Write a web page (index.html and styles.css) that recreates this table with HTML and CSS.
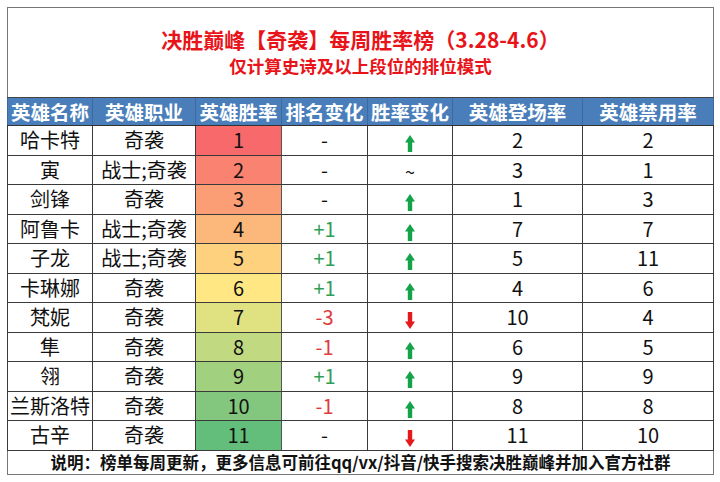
FILE: index.html
```html
<!DOCTYPE html>
<html lang="zh-CN">
<head>
<meta charset="utf-8">
<title>决胜巅峰【奇袭】每周胜率榜</title>
<link rel="stylesheet" href="styles.css">
</head>
<body>
<table class="board">
  <colgroup>
    <col class="c-name"><col class="c-role"><col class="c-rate"><col class="c-rank"><col class="c-trend"><col class="c-pick"><col class="c-ban">
  </colgroup>
  <thead>
    <tr class="title-row">
      <th colspan="7">
        <div class="title">决胜巅峰【奇袭】每周胜率榜（3.28-4.6）</div>
        <div class="subtitle">仅计算史诗及以上段位的排位模式</div>
      </th>
    </tr>
    <tr class="head-row">
      <th>英雄名称</th><th>英雄职业</th><th>英雄胜率</th><th>排名变化</th><th>胜率变化</th><th>英雄登场率</th><th>英雄禁用率</th>
    </tr>
  </thead>
  <tbody>
    <tr><td>哈卡特</td><td>奇袭</td><td class="rate" style="background:#f8696b">1</td><td>-</td><td><svg class="arrow up" viewBox="0 0 10 17"><path d="M5 0 L10 7.5 H7.2 V17 H2.8 V7.5 H0 Z"/></svg></td><td>2</td><td>2</td></tr>
    <tr><td>寅</td><td>战士;奇袭</td><td class="rate" style="background:#f98370">2</td><td>-</td><td><span class="tilde">~</span></td><td>3</td><td>1</td></tr>
    <tr><td>剑锋</td><td>奇袭</td><td class="rate" style="background:#fb9d75">3</td><td>-</td><td><svg class="arrow up" viewBox="0 0 10 17"><path d="M5 0 L10 7.5 H7.2 V17 H2.8 V7.5 H0 Z"/></svg></td><td>1</td><td>3</td></tr>
    <tr><td>阿鲁卡</td><td>战士;奇袭</td><td class="rate" style="background:#fcb77a">4</td><td class="pos">+1</td><td><svg class="arrow up" viewBox="0 0 10 17"><path d="M5 0 L10 7.5 H7.2 V17 H2.8 V7.5 H0 Z"/></svg></td><td>7</td><td>7</td></tr>
    <tr><td>子龙</td><td>战士;奇袭</td><td class="rate" style="background:#fed17f">5</td><td class="pos">+1</td><td><svg class="arrow up" viewBox="0 0 10 17"><path d="M5 0 L10 7.5 H7.2 V17 H2.8 V7.5 H0 Z"/></svg></td><td>5</td><td>11</td></tr>
    <tr><td>卡琳娜</td><td>奇袭</td><td class="rate" style="background:#ffe884">6</td><td class="pos">+1</td><td><svg class="arrow up" viewBox="0 0 10 17"><path d="M5 0 L10 7.5 H7.2 V17 H2.8 V7.5 H0 Z"/></svg></td><td>4</td><td>6</td></tr>
    <tr><td>梵妮</td><td>奇袭</td><td class="rate" style="background:#e0e282">7</td><td class="neg">-3</td><td><svg class="arrow down" viewBox="0 0 10 17"><path d="M5 17 L10 9.5 H7.2 V0 H2.8 V9.5 H0 Z"/></svg></td><td>10</td><td>4</td></tr>
    <tr><td>隼</td><td>奇袭</td><td class="rate" style="background:#c1d980">8</td><td class="neg">-1</td><td><svg class="arrow up" viewBox="0 0 10 17"><path d="M5 0 L10 7.5 H7.2 V17 H2.8 V7.5 H0 Z"/></svg></td><td>6</td><td>5</td></tr>
    <tr><td>翎</td><td>奇袭</td><td class="rate" style="background:#a1d07f">9</td><td class="pos">+1</td><td><svg class="arrow up" viewBox="0 0 10 17"><path d="M5 0 L10 7.5 H7.2 V17 H2.8 V7.5 H0 Z"/></svg></td><td>9</td><td>9</td></tr>
    <tr><td>兰斯洛特</td><td>奇袭</td><td class="rate" style="background:#82c77d">10</td><td class="neg">-1</td><td><svg class="arrow up" viewBox="0 0 10 17"><path d="M5 0 L10 7.5 H7.2 V17 H2.8 V7.5 H0 Z"/></svg></td><td>8</td><td>8</td></tr>
    <tr><td>古辛</td><td>奇袭</td><td class="rate" style="background:#63be7b">11</td><td>-</td><td><svg class="arrow down" viewBox="0 0 10 17"><path d="M5 17 L10 9.5 H7.2 V0 H2.8 V9.5 H0 Z"/></svg></td><td>11</td><td>10</td></tr>
  </tbody>
  <tfoot>
    <tr class="foot-row">
      <td colspan="7">说明：榜单每周更新，更多信息可前往qq/vx/抖音/快手搜索决胜巅峰并加入官方社群</td>
    </tr>
  </tfoot>
</table>
</body>
</html>
```

FILE: styles.css
```css
html, body {
  margin: 0;
  padding: 0;
  background: #ffffff;
}

body {
  padding: 7px;
  font-family: "Noto Sans CJK SC", "Noto Sans", sans-serif;
  color: #111;
}

.board {
  width: 706px;
  border-collapse: collapse;
  table-layout: fixed;
  border: 1px solid #777;
}

.c-name { width: 85px; }
.c-role { width: 103px; }
.c-rate { width: 86px; }
.c-rank { width: 86px; }
.c-trend { width: 85px; }
.c-pick { width: 130px; }
.c-ban { width: 131px; }

.title-row th {
  height: 89px;
  padding: 0;
  background: #fff;
  color: #e8141a;
  font-weight: 700;
  text-align: center;
  vertical-align: top;
  border-bottom: 1px solid #444;
}

.title {
  font-size: 21px;
  line-height: 24px;
  margin-top: 19px;
}

.subtitle {
  font-size: 17.5px;
  line-height: 22px;
  margin-top: 4px;
}

.head-row th {
  height: 27px;
  padding: 0;
  background: #4a7ebb;
  color: #fff;
  font-size: 19.5px;
  font-weight: 700;
  line-height: 1;
  text-align: center;
  border: 1px solid #3c6a9f;
  border-bottom: 1px solid #333;
}

tbody td {
  height: 28.5px;
  padding: 0;
  font-size: 20px;
  line-height: 1;
  text-align: center;
  vertical-align: middle;
  border: 1px solid #3a3a3a;
  white-space: nowrap;
  overflow: hidden;
}

tbody td.rate {
  border-left-color: #555;
  border-right-color: #555;
}

.pos { color: #2e9e55; }
.neg { color: #e03a3c; }

.arrow {
  display: inline-block;
  width: 10px;
  height: 17px;
  vertical-align: middle;
  margin-top: 6px;
}

.arrow.up path { fill: #15a34a; }
.arrow.down path { fill: #e3191c; }

.tilde {
  display: inline-block;
  font-size: 18px;
  margin-top: 4px;
}

.foot-row td {
  height: 23px;
  padding: 0;
  font-size: 16.5px;
  font-weight: 700;
  line-height: 1;
  text-align: center;
  color: #111;
  border-top: 1px solid #3a3a3a;
}
```
